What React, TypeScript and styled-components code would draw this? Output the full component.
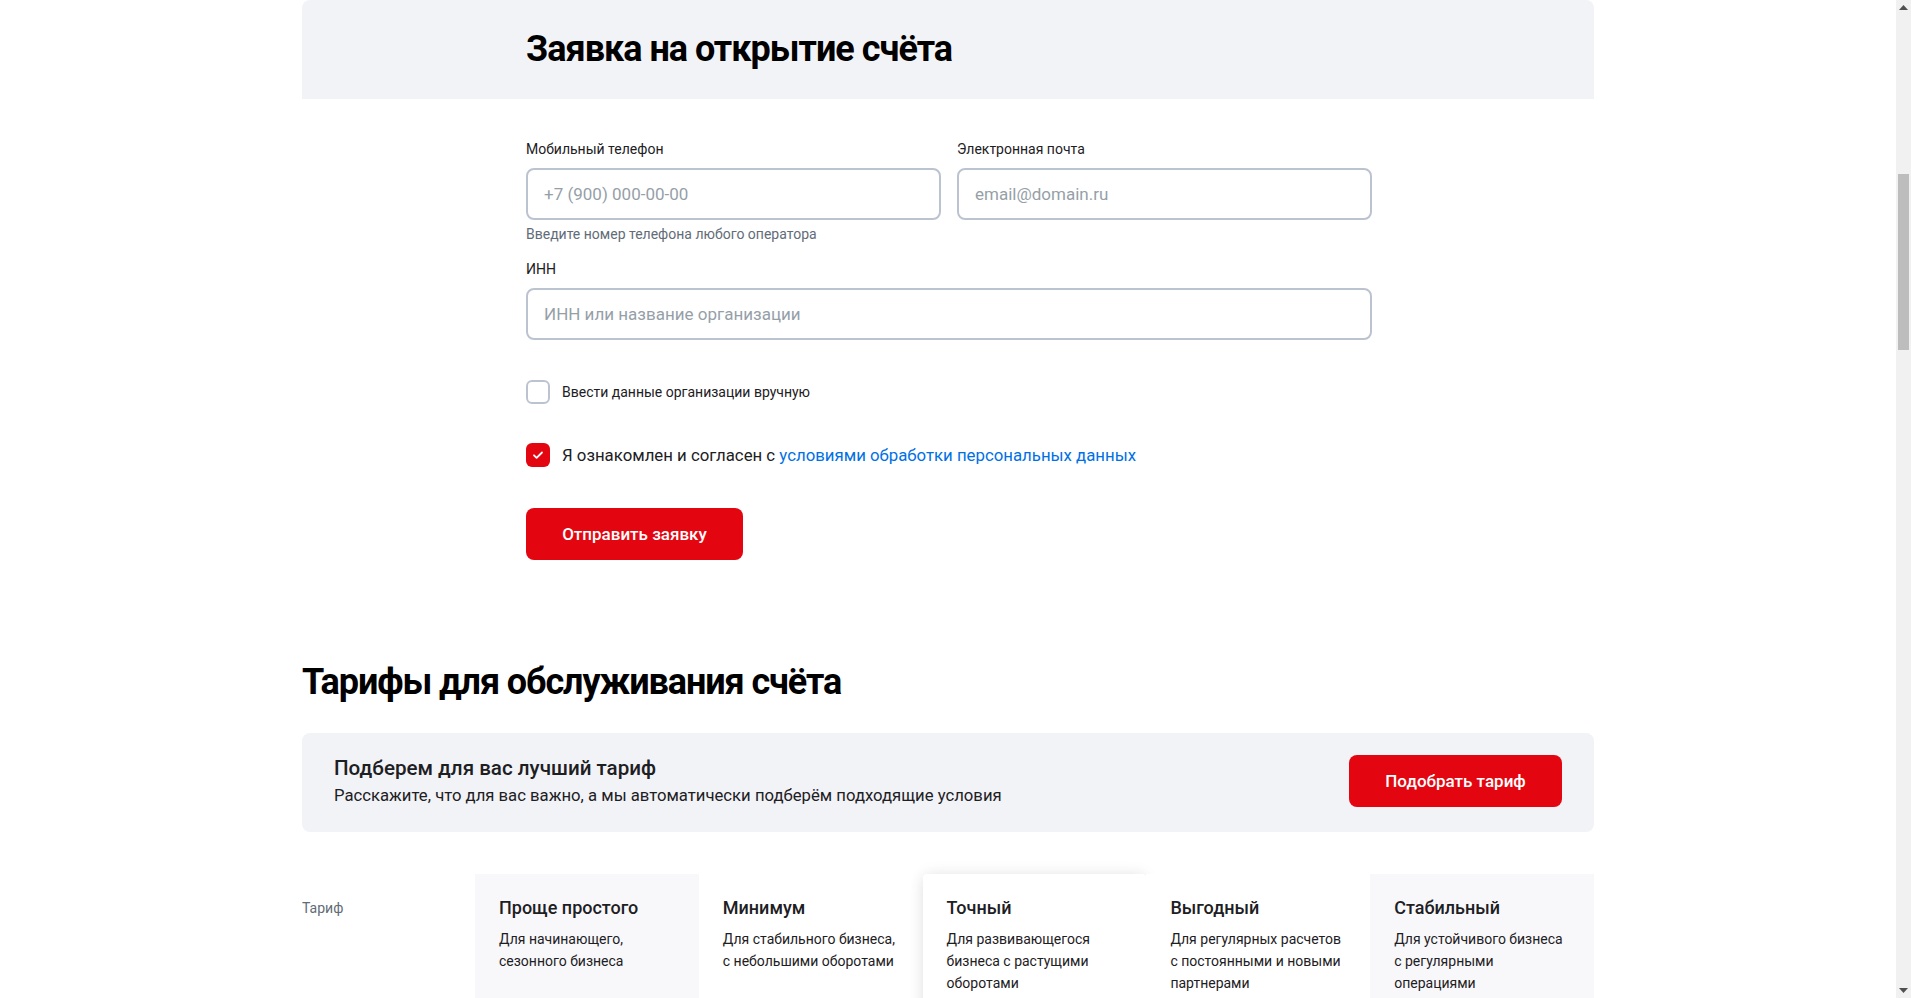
import React from "react";
import styled, { createGlobalStyle } from "styled-components";

const GlobalStyle = createGlobalStyle`
  html, body { margin: 0; padding: 0; background: #ffffff; }
  body { font-family: Roboto, "Noto Sans", Arial, sans-serif; color: #1D2023; }
  * { box-sizing: border-box; }
`;

const Viewport = styled.div`
  padding-right: 15px;
`;

const Page = styled.div`
  width: 1292px;
  margin: 0 auto;
  padding-bottom: 240px;
`;

const ScrollTrack = styled.div`
  position: fixed;
  top: 0;
  right: 0;
  width: 15px;
  height: 100vh;
  background: #F1F1F1;
`;

const ScrollArrow = styled.div<{ $down?: boolean }>`
  position: absolute;
  left: 0;
  width: 15px;
  height: 15px;
  ${(p) => (p.$down ? "bottom: 0;" : "top: 0;")}
  display: flex;
  align-items: center;
  justify-content: center;
`;

const ScrollThumb = styled.div`
  position: absolute;
  left: 2px;
  top: 174px;
  width: 11px;
  height: 176px;
  background: #BDBDBD;
`;

const HeaderPanel = styled.div`
  background: #F2F3F7;
  border-radius: 8px 8px 0 0;
  padding: 27px 0 28px 224px;
`;

const Title = styled.h1`
  margin: 0;
  font-size: 36px;
  line-height: 44px;
  font-weight: 700;
  letter-spacing: -1px;
  color: #000000;
`;

const Form = styled.form`
  width: 846px;
  margin-left: 224px;
  padding-top: 40px;
  display: flex;
  flex-direction: column;
`;

const Row = styled.div`
  display: grid;
  grid-template-columns: 1fr 1fr;
  gap: 16px;
`;

const Field = styled.div`
  display: flex;
  flex-direction: column;
`;

const Label = styled.label<{ $mt?: number }>`
  font-size: 14px;
  line-height: 20px;
  color: #1D2023;
  margin-top: ${(p) => p.$mt ?? 0}px;
  margin-bottom: 9px;
`;

const Input = styled.input`
  height: 52px;
  width: 100%;
  border: 2px solid #BCC3D0;
  border-radius: 8px;
  padding: 0 16px;
  font-family: Roboto, Arial, sans-serif;
  font-size: 17px;
  color: #1D2023;
  background: #fff;
  outline: none;
  &::placeholder { color: #969FA8; }
`;

const Hint = styled.div`
  margin-top: 4px;
  font-size: 14px;
  line-height: 20px;
  color: #626C77;
`;

const CheckRow = styled.label<{ $big?: boolean; $mt: number }>`
  display: flex;
  align-items: center;
  gap: 12px;
  margin-top: ${(p) => p.$mt}px;
  font-size: ${(p) => (p.$big ? "16.8px" : "14px")};
  line-height: 24px;
  color: #1D2023;
`;

const Box = styled.span<{ $checked?: boolean }>`
  width: 24px;
  height: 24px;
  flex: none;
  border-radius: 6px;
  border: ${(p) => (p.$checked ? "none" : "2px solid #BCC3D0")};
  background: ${(p) => (p.$checked ? "#E30611" : "#fff")};
  display: flex;
  align-items: center;
  justify-content: center;
`;

const Link = styled.a`
  color: #0070E5;
  text-decoration: none;
`;

const RedButton = styled.button<{ $w: number }>`
  height: 52px;
  width: ${(p) => p.$w}px;
  border: none;
  border-radius: 8px;
  background: #E30611;
  color: #fff;
  font-family: Roboto, Arial, sans-serif;
  font-size: 17px;
  font-weight: 500;
  flex: none;
`;

const SubmitWrap = styled.div`
  margin-top: 41px;
`;

const SectionTitle = styled.h2`
  margin: 100px 0 0;
  font-size: 36px;
  line-height: 44px;
  font-weight: 700;
  letter-spacing: -1.1px;
  color: #000;
`;

const Banner = styled.div`
  margin-top: 29px;
  background: #F2F3F7;
  border-radius: 8px;
  padding: 21px 32px 24px 32px;
  display: flex;
  align-items: center;
  justify-content: space-between;
`;

const BannerText = styled.div`
  display: flex;
  flex-direction: column;
  gap: 2px;
`;

const BannerTitle = styled.div`
  font-size: 20.6px;
  line-height: 28px;
  font-weight: 500;
  color: #1D2023;
`;

const BannerSub = styled.div`
  font-size: 16.7px;
  line-height: 24px;
  color: #1D2023;
`;

const Tariffs = styled.div`
  margin-top: 42px;
  display: grid;
  grid-template-columns: 173px repeat(5, 1fr);
`;

const RowLabel = styled.div`
  padding-top: 24px;
  font-size: 14px;
  line-height: 20px;
  color: #626C77;
`;

const Card = styled.div<{ $tone: "gray" | "white" | "raised" }>`
  min-height: 180px;
  padding: 22px 24px 24px;
  background: ${(p) => (p.$tone === "gray" ? "#F8F8FB" : "#fff")};
  box-shadow: ${(p) =>
    p.$tone === "raised" ? "0 0 16px rgba(0,0,0,0.08), 0 4px 16px rgba(0,0,0,0.06)" : "none"};
  border-radius: ${(p) => (p.$tone === "raised" ? "4px 4px 0 0" : "0")};
`;

const CardTitle = styled.div`
  font-size: 18px;
  line-height: 24px;
  font-weight: 500;
  color: #1D2023;
`;

const CardDesc = styled.div`
  margin-top: 8px;
  font-size: 14px;
  line-height: 22px;
  color: #1D2023;
`;

const tariffs: { name: string; desc: string; tone: "gray" | "white" | "raised" }[] = [
  { name: "Проще простого", desc: "Для начинающего, сезонного бизнеса", tone: "gray" },
  { name: "Минимум", desc: "Для стабильного бизнеса, с небольшими оборотами", tone: "white" },
  { name: "Точный", desc: "Для развивающегося бизнеса с растущими оборотами", tone: "raised" },
  { name: "Выгодный", desc: "Для регулярных расчетов с постоянными и новыми партнерами", tone: "white" },
  { name: "Стабильный", desc: "Для устойчивого бизнеса с регулярными операциями", tone: "gray" },
];

export default function App() {
  return (
    <>
      <GlobalStyle />
      <Viewport>
        <Page>
          <HeaderPanel>
            <Title>Заявка на открытие счёта</Title>
          </HeaderPanel>
          <Form onSubmit={(e) => e.preventDefault()}>
            <Row>
              <Field>
                <Label>Мобильный телефон</Label>
                <Input placeholder="+7 (900) 000-00-00" />
                <Hint>Введите номер телефона любого оператора</Hint>
              </Field>
              <Field>
                <Label>Электронная почта</Label>
                <Input placeholder="email@domain.ru" />
              </Field>
            </Row>
            <Field>
              <Label $mt={15}>ИНН</Label>
              <Input placeholder="ИНН или название организации" />
            </Field>
            <CheckRow $mt={40}>
              <Box />
              Ввести данные организации вручную
            </CheckRow>
            <CheckRow $big $mt={39}>
              <Box $checked>
                <svg width="14" height="14" viewBox="0 0 14 14" fill="none">
                  <path d="M3 7.3l2.6 2.6L11 4.5" stroke="#fff" strokeWidth="1.8" strokeLinecap="round" strokeLinejoin="round" />
                </svg>
              </Box>
              <span>
                Я ознакомлен и согласен с <Link href="#">условиями обработки персональных данных</Link>
              </span>
            </CheckRow>
            <SubmitWrap>
              <RedButton type="submit" $w={217}>Отправить заявку</RedButton>
            </SubmitWrap>
          </Form>

          <SectionTitle>Тарифы для обслуживания счёта</SectionTitle>
          <Banner>
            <BannerText>
              <BannerTitle>Подберем для вас лучший тариф</BannerTitle>
              <BannerSub>Расскажите, что для вас важно, а мы автоматически подберём подходящие условия</BannerSub>
            </BannerText>
            <RedButton type="button" $w={213}>Подобрать тариф</RedButton>
          </Banner>

          <Tariffs>
            <RowLabel>Тариф</RowLabel>
            {tariffs.map((t) => (
              <Card key={t.name} $tone={t.tone}>
                <CardTitle>{t.name}</CardTitle>
                <CardDesc>{t.desc}</CardDesc>
              </Card>
            ))}
          </Tariffs>
        </Page>
      </Viewport>
      <ScrollTrack>
        <ScrollArrow>
          <svg width="9" height="5" viewBox="0 0 9 5"><path d="M0 5L4.5 0L9 5Z" fill="#505050" /></svg>
        </ScrollArrow>
        <ScrollThumb />
        <ScrollArrow $down>
          <svg width="9" height="5" viewBox="0 0 9 5"><path d="M0 0L4.5 5L9 0Z" fill="#505050" /></svg>
        </ScrollArrow>
      </ScrollTrack>
    </>
  );
}
